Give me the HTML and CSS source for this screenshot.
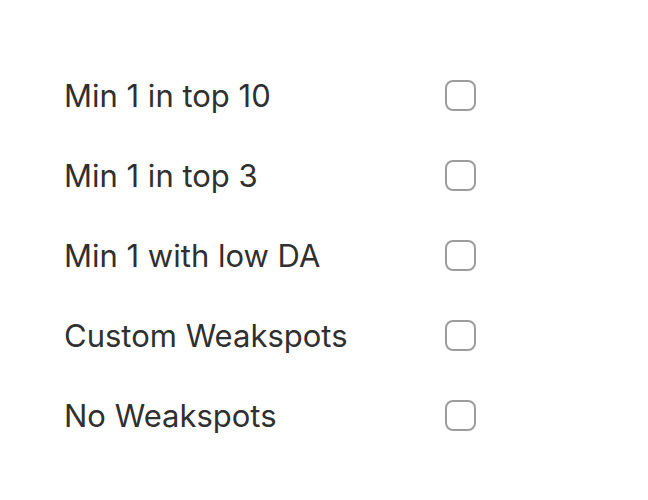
FILE: index.html
```html
<!DOCTYPE html>
<html>
<head>
<meta charset="utf-8">
<link rel="stylesheet" href="styles.css">
</head>
<body>
<ul class="filters">
  <li class="row"><span class="label">Min 1 in top 10</span><span class="box"></span></li>
  <li class="row"><span class="label">Min 1 in top 3</span><span class="box"></span></li>
  <li class="row"><span class="label">Min 1 with low DA</span><span class="box"></span></li>
  <li class="row"><span class="label">Custom Weakspots</span><span class="box"></span></li>
  <li class="row"><span class="label">No Weakspots</span><span class="box"></span></li>
</ul>
</body>
</html>
```
FILE: styles.css
```css
html, body {
  margin: 0;
  padding: 0;
  background: #ffffff;
}
.filters {
  list-style: none;
  margin: 0;
  padding: 55px 0 0 64px;
  display: flex;
  flex-direction: column;
  width: 412px;
}
.row {
  height: 80px;
  display: flex;
  align-items: center;
  justify-content: space-between;
}
.label {
  font-family: Inter, "Noto Sans", sans-serif;
  font-size: 31px;
  color: #303030;
  letter-spacing: 0;
}
.box {
  width: 27px;
  height: 27px;
  border: 2px solid #9c9c9c;
  border-radius: 8px;
}
```
